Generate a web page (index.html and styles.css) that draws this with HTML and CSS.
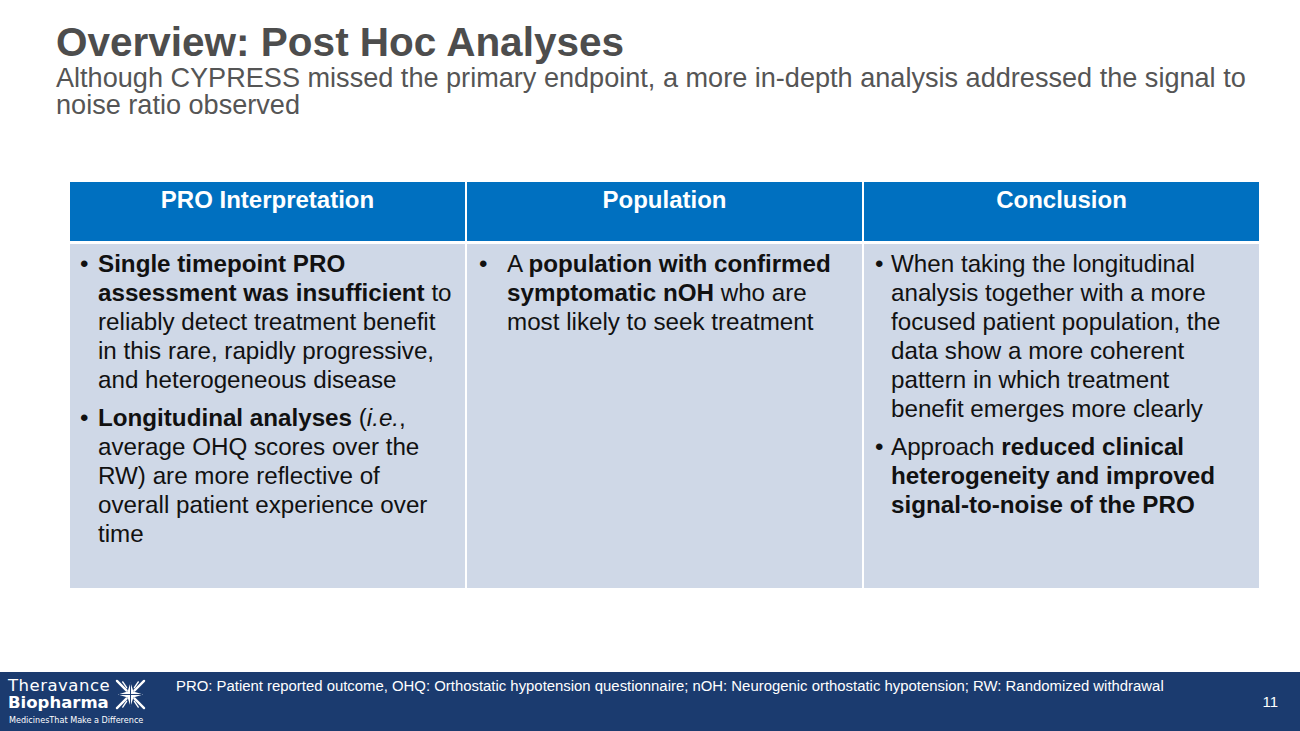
FILE: index.html
```html
<!DOCTYPE html>
<html lang="en">
<head>
<meta charset="utf-8">
<title>Overview: Post Hoc Analyses</title>
<link rel="stylesheet" href="styles.css">
</head>
<body>
<div class="slide">
  <header class="head">
    <h1 class="title">Overview: Post Hoc Analyses</h1>
    <p class="subtitle">Although CYPRESS missed the primary endpoint, a more in-depth analysis addressed the signal to noise ratio observed</p>
  </header>

  <main class="table">
    <div class="th">PRO Interpretation</div>
    <div class="th">Population</div>
    <div class="th">Conclusion</div>

    <div class="td td-left">
      <div class="item"><span class="dot">•</span><span class="txt"><b>Single timepoint PRO assessment was insufficient</b> to reliably detect treatment benefit in this rare, rapidly progressive, and heterogeneous disease</span></div>
      <div class="item"><span class="dot">•</span><span class="txt"><b>Longitudinal analyses</b> (<i>i.e.</i>, average OHQ scores over the RW) are more reflective of overall patient experience over time</span></div>
    </div>
    <div class="td td-mid">
      <div class="item"><span class="dot">•</span><span class="txt">A <b>population with confirmed symptomatic nOH</b> who are most likely to seek treatment</span></div>
    </div>
    <div class="td td-right">
      <div class="item"><span class="dot">•</span><span class="txt">When taking the longitudinal analysis together with a more focused patient population, the data show a more coherent pattern in which treatment benefit emerges more clearly</span></div>
      <div class="item"><span class="dot">•</span><span class="txt">Approach <b>reduced clinical heterogeneity and improved signal-to-noise of the PRO</b></span></div>
    </div>
  </main>

  <footer class="foot">
    <div class="logo">
      <div class="logo-top">
        <div class="logo-words">
          <span class="logo-a">Theravance</span>
          <span class="logo-b">Biopharma</span>
        </div>
        <svg class="logo-star" viewBox="0 0 34 32" aria-hidden="true">
          <g stroke="#ffffff" stroke-width="2.4" stroke-linecap="round">
            <line x1="3" y1="2" x2="13" y2="12"/>
            <line x1="31" y1="2" x2="21" y2="12"/>
            <line x1="3" y1="30" x2="13" y2="20"/>
            <line x1="31" y1="30" x2="21" y2="20"/>
          </g>
          <g stroke="#ffffff" stroke-width="1.4" stroke-linecap="round">
            <line x1="9" y1="3" x2="13" y2="9"/>
            <line x1="25" y1="3" x2="21" y2="9"/>
            <line x1="9" y1="29" x2="13" y2="23"/>
            <line x1="25" y1="29" x2="21" y2="23"/>
          </g>
          <path d="M17 3.5 L20 13 L30 16 L20 19 L17 28.5 L14 19 L4 16 L14 13 Z" fill="#ffffff"/>
          <g stroke="#1b3b6f" stroke-width="1">
            <line x1="17" y1="4" x2="17" y2="28"/>
            <line x1="5" y1="16" x2="29" y2="16"/>
          </g>
        </svg>
      </div>
      <div class="logo-tag">MedicinesThat Make a Difference</div>
    </div>
    <p class="footnote">PRO: Patient reported outcome, OHQ: Orthostatic hypotension questionnaire; nOH: Neurogenic orthostatic hypotension; RW: Randomized withdrawal</p>
    <div class="pagenum">11</div>
  </footer>
</div>
</body>
</html>
```

FILE: styles.css
```css
* { box-sizing: border-box; }

html, body {
  margin: 0;
  padding: 0;
  background: #ffffff;
}

body {
  font-family: "Liberation Sans", Arial, sans-serif;
}

.slide {
  width: 1300px;
  height: 731px;
  display: flex;
  flex-direction: column;
  overflow: hidden;
}

.head {
  padding: 20px 40px 0 56px;
}

.title {
  margin: 0;
  font-size: 40.5px;
  line-height: 44px;
  font-weight: bold;
  color: #4d4d4d;
}

.subtitle {
  margin: 0;
  font-size: 27.1px;
  line-height: 27px;
  color: #555555;
}

.table {
  margin: 64px 41px 0 70px;
  display: grid;
  grid-template-columns: 395px 395px 395px;
  grid-template-rows: 59px 344px;
  column-gap: 2px;
  row-gap: 3px;
}

.th {
  background: #0070c0;
  color: #ffffff;
  font-weight: bold;
  font-size: 24px;
  line-height: 29px;
  text-align: center;
  padding-top: 3px;
}

.td {
  background: #cfd8e7;
  color: #111111;
  font-size: 24.2px;
  line-height: 29px;
  padding-top: 5px;
}

.td-left { padding-left: 10px; padding-right: 10px; }
.td-mid { padding-left: 12px; padding-right: 8px; }
.td-right { padding-left: 11px; padding-right: 20px; }

.item {
  display: flex;
}

.item + .item {
  margin-top: 9px;
}

.dot {
  flex: 0 0 18px;
}

.td-mid .dot { flex-basis: 28px; }
.td-right .dot { flex-basis: 16px; }

.txt b { font-weight: bold; }

.foot {
  margin-top: auto;
  height: 59px;
  background: #1b3b6f;
  color: #ffffff;
  display: flex;
  align-items: flex-start;
}

.logo {
  padding: 6px 0 0 8px;
  flex: 0 0 176px;
}

.logo-top {
  display: flex;
  align-items: center;
  gap: 4px;
}

.logo-words {
  display: flex;
  flex-direction: column;
  font-family: "DejaVu Sans", sans-serif;
}

.logo-a {
  font-size: 16.5px;
  line-height: 16px;
  letter-spacing: 0.5px;
}

.logo-b {
  font-size: 16.5px;
  line-height: 17px;
  font-weight: bold;
}

.logo-star {
  width: 33px;
  height: 31px;
}

.logo-tag {
  font-family: "DejaVu Sans", sans-serif;
  font-size: 8.1px;
  line-height: 10px;
  margin-top: 4px;
  margin-left: 1px;
}

.footnote {
  margin: 6px 0 0 0;
  font-size: 14.9px;
  line-height: 17px;
}

.pagenum {
  margin-left: auto;
  margin-right: 22px;
  margin-top: 21px;
  font-size: 15px;
  line-height: 17px;
}
```
